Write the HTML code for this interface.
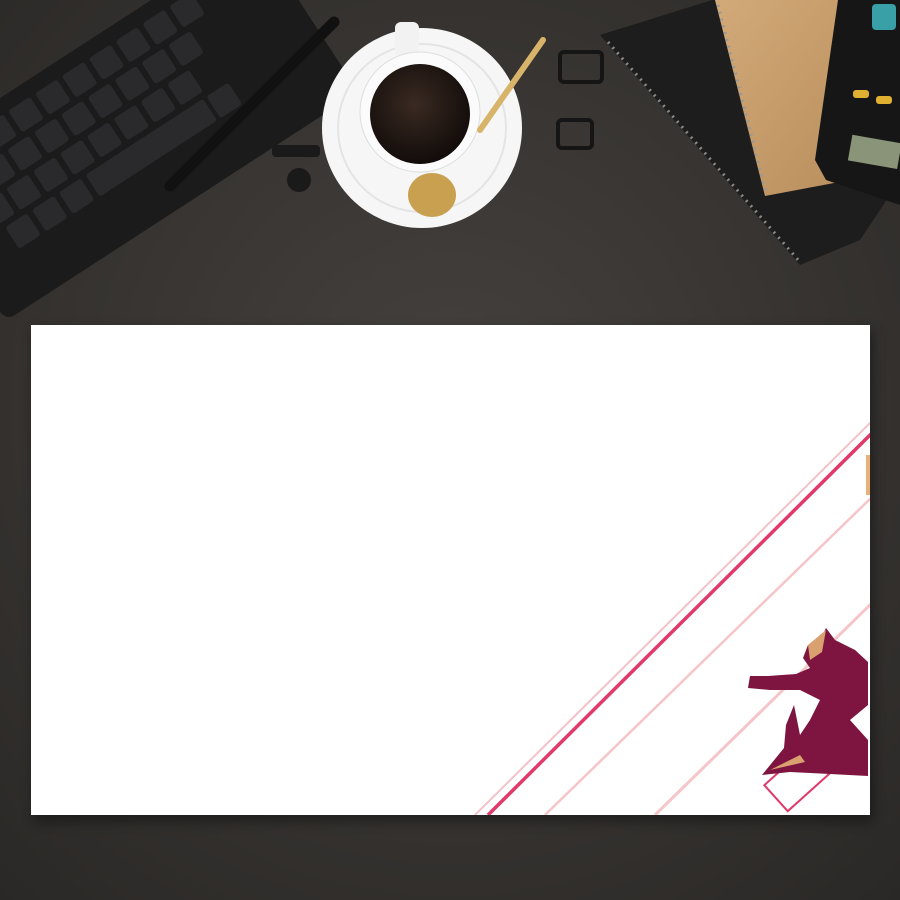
<!DOCTYPE html>
<html><head><style>
html,body{margin:0;padding:0;width:900px;height:900px;overflow:hidden;background:#3b3836;}
svg{display:block}
</style></head><body>
<svg width="900" height="900" viewBox="0 0 900 900" xmlns="http://www.w3.org/2000/svg">
<defs>
<radialGradient id="bg" cx="0.5" cy="0.45" r="0.75">
<stop offset="0" stop-color="#45413e"/><stop offset="1" stop-color="#2a2826"/></radialGradient>
<linearGradient id="kraft" x1="0" y1="0" x2="1" y2="1"><stop offset="0" stop-color="#d2a978"/><stop offset="1" stop-color="#b88d5c"/></linearGradient>
<radialGradient id="cof" cx="0.45" cy="0.4" r="0.6"><stop offset="0" stop-color="#3a2a22"/><stop offset="1" stop-color="#120c0a"/></radialGradient>
</defs>
<rect width="900" height="900" fill="url(#bg)"/>
<!-- keyboard -->
<g transform="rotate(-33 150 120)">
<rect x="-80" y="20" width="420" height="190" rx="10" fill="#1b1b1c"/>
<g fill="#2a2a2c">
<rect x="-60" y="35" width="26" height="26" rx="3"/><rect x="-28" y="35" width="26" height="26" rx="3"/><rect x="4" y="35" width="26" height="26" rx="3"/><rect x="36" y="35" width="26" height="26" rx="3"/><rect x="68" y="35" width="26" height="26" rx="3"/><rect x="100" y="35" width="26" height="26" rx="3"/><rect x="132" y="35" width="26" height="26" rx="3"/><rect x="164" y="35" width="26" height="26" rx="3"/><rect x="196" y="35" width="26" height="26" rx="3"/><rect x="228" y="35" width="26" height="26" rx="3"/>
<rect x="-50" y="67" width="26" height="26" rx="3"/><rect x="-18" y="67" width="26" height="26" rx="3"/><rect x="14" y="67" width="26" height="26" rx="3"/><rect x="46" y="67" width="26" height="26" rx="3"/><rect x="78" y="67" width="26" height="26" rx="3"/><rect x="110" y="67" width="26" height="26" rx="3"/><rect x="142" y="67" width="26" height="26" rx="3"/><rect x="174" y="67" width="26" height="26" rx="3"/><rect x="206" y="67" width="26" height="26" rx="3"/>
<rect x="-40" y="99" width="26" height="26" rx="3"/><rect x="-8" y="99" width="26" height="26" rx="3"/><rect x="24" y="99" width="26" height="26" rx="3"/><rect x="56" y="99" width="26" height="26" rx="3"/><rect x="88" y="99" width="26" height="26" rx="3"/><rect x="120" y="99" width="26" height="26" rx="3"/><rect x="152" y="99" width="26" height="26" rx="3"/><rect x="184" y="99" width="26" height="26" rx="3"/>
<rect x="-30" y="131" width="26" height="26" rx="3"/><rect x="2" y="131" width="26" height="26" rx="3"/><rect x="34" y="131" width="26" height="26" rx="3"/><rect x="66" y="131" width="140" height="26" rx="3"/><rect x="210" y="131" width="26" height="26" rx="3"/>
</g></g>
<!-- pen -->
<line x1="170" y1="186" x2="334" y2="22" stroke="#111" stroke-width="11" stroke-linecap="round"/>
<!-- clip -->
<rect x="272" y="145" width="48" height="12" rx="4" fill="#1a1a1a"/>
<circle cx="299" cy="180" r="12" fill="#1a1a1a"/>
<!-- saucer & cup -->
<circle cx="422" cy="128" r="100" fill="#f6f6f6"/>
<circle cx="422" cy="128" r="84" fill="none" stroke="#e4e4e4" stroke-width="2"/>
<rect x="395" y="22" width="24" height="35" rx="6" fill="#f2f2f2"/>
<circle cx="420" cy="112" r="60" fill="#fbfbfb" stroke="#ddd"/>
<circle cx="420" cy="114" r="50" fill="url(#cof)"/>
<line x1="480" y1="130" x2="543" y2="40" stroke="#d7b46a" stroke-width="6" stroke-linecap="round"/>
<ellipse cx="432" cy="195" rx="24" ry="22" fill="#c9a050"/>
<!-- binder clips -->
<rect x="560" y="52" width="42" height="30" rx="4" fill="none" stroke="#151515" stroke-width="4"/>
<rect x="558" y="120" width="34" height="28" rx="4" fill="none" stroke="#151515" stroke-width="4"/>
<!-- notebooks -->
<polygon points="600,35 712,0 900,0 900,180 860,240 800,265" fill="#1e1d1d"/>
<polyline points="608,42 800,262" stroke="#888" stroke-width="3" stroke-dasharray="2 5" fill="none"/>
<polygon points="715,0 870,0 850,180 765,196" fill="url(#kraft)"/>
<polyline points="718,5 766,192" stroke="#999" stroke-width="3" stroke-dasharray="2 5" fill="none"/>
<!-- calculator -->
<polygon points="838,0 900,0 900,205 826,180 815,160" fill="#161616"/>
<rect x="872" y="4" width="24" height="26" rx="4" fill="#3aa0a8"/>
<rect x="850" y="138" width="50" height="26" fill="#8a9478" transform="rotate(10 870 150)"/>
<rect x="853" y="90" width="16" height="8" rx="3" fill="#e0b030"/>
<rect x="876" y="96" width="16" height="8" rx="3" fill="#e0b030"/>
<!-- card shadow & card -->
<rect x="34" y="330" width="840" height="492" fill="#000" opacity="0.35" filter="blur(6px)"/>
<rect x="31" y="325" width="839" height="490" fill="#fff"/>
<clipPath id="c"><rect x="31" y="325" width="839" height="490"/></clipPath>
<g clip-path="url(#c)">
<line x1="475" y1="815" x2="872" y2="421" stroke="#f3c2c8" stroke-width="2"/>
<line x1="488" y1="815" x2="872" y2="433" stroke="#e0396a" stroke-width="3.5"/>
<line x1="545" y1="815" x2="872" y2="497" stroke="#f6c5c8" stroke-width="2.5"/>
<line x1="655" y1="815" x2="872" y2="603" stroke="#f6c5c8" stroke-width="3"/>
<rect x="770" y="760" width="80" height="35" fill="none" stroke="#e0396a" stroke-width="2" transform="rotate(-42 800 780)"/>
<path d="M868 662 L855 650 L835 640 L826 628 L820 640 L808 645 L803 658 L810 668 L796 674 L768 676 L750 676 L748 688 L770 690 L800 690 L820 700 L810 720 L800 735 L794 705 L786 725 L784 748 L762 775 L790 772 L830 774 L868 776 L868 740 L850 720 L868 705 Z" fill="#7e1440"/>
<path d="M808 645 L826 630 L822 652 L810 660 Z" fill="#d9a070"/>
<path d="M770 770 L800 755 L805 762 Z" fill="#d9a070"/>
<rect x="866" y="455" width="4" height="40" fill="#eab07a"/>
</g>
</svg>
</body></html>
